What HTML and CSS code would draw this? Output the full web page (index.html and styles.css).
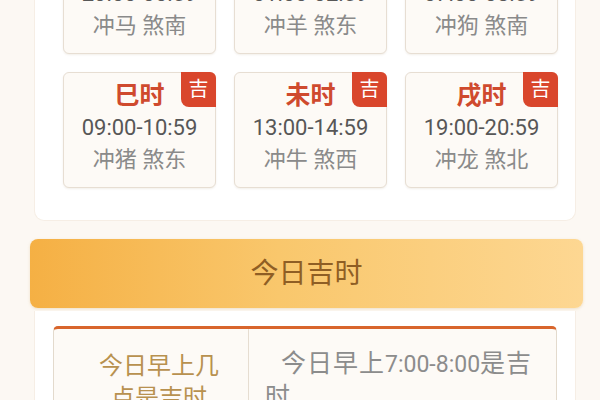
FILE: index.html
```html
<!DOCTYPE html>
<html lang="zh-CN">
<head>
	<meta charset="UTF-8">
	<title>今日吉时</title>
	<link rel="stylesheet" href="styles.css">
</head>
<body>
<div class="wrap">
    <div class="panel">
        <ul class="hours">
            <li class="hour"><h3>子时</h3><p class="time">23:00-00:59</p><p class="chong">冲马 煞南</p></li>
            <li class="hour"><h3>丑时</h3><p class="time">01:00-02:59</p><p class="chong">冲羊 煞东</p></li>
            <li class="hour"><h3>辰时</h3><p class="time">07:00-08:59</p><p class="chong">冲狗 煞南</p></li>
            <li class="hour"><span class="tag">吉</span><h3>巳时</h3><p class="time">09:00-10:59</p><p class="chong">冲猪 煞东</p></li>
            <li class="hour"><span class="tag">吉</span><h3>未时</h3><p class="time">13:00-14:59</p><p class="chong">冲牛 煞西</p></li>
            <li class="hour"><span class="tag">吉</span><h3>戌时</h3><p class="time">19:00-20:59</p><p class="chong">冲龙 煞北</p></li>
        </ul>
    </div>
    <!--/panel-->
    <div class="banner">今日吉时</div>
    <div class="panel panel-qa">
        <div class="qa">
            <div class="q">今日早上几点是吉时</div>
            <div class="a">今日早上<span class="num">7:00-8:00</span>是吉时</div>
        </div>
    </div>
</div>
<!--/wrap-->
</body>
</html>
```

FILE: styles.css
```css
body,div,ul,li,p,h3 {margin:0;padding:0;}
body {
	background:#fcf8f3;
	font-family:Roboto,"Noto Sans CJK SC",sans-serif;
	overflow:hidden;
}
.wrap {
	width:553px;
	padding-left:30px;
}
.panel {
	width:542px;
	margin:-82px 0 0 4px;
	background:#fff;
	border:1px solid #f6eee5;
	border-top:0;
	border-radius:0 0 10px 10px;
	box-sizing:border-box;
	padding:20px 0 32px 28px;
}
.hours {
	display:grid;
	grid-template-columns:repeat(3,153px);
	gap:18px;
	list-style:none;
}
.hour {
	position:relative;
	height:116px;
	box-sizing:border-box;
	padding-top:8px;
	text-align:center;
	background:#fdfaf6;
	border:1px solid #e7ded3;
	border-radius:6px;
	box-shadow:0 1px 2px rgba(150,120,80,.12);
}
.hour h3 {
	font-size:25px;
	line-height:30px;
	font-weight:bold;
	color:#cf4a2e;
}
.hour .time {
	font-size:22px;
	line-height:34px;
	color:#575757;
}
.hour .chong {
	font-size:22px;
	line-height:30px;
	color:#8a8a8a;
}
.tag {
	position:absolute;
	top:-1px;
	right:-1px;
	width:35px;
	height:35px;
	line-height:34px;
	font-size:20px;
	color:#fff;
	background:#d9462c;
	border-radius:0 6px 0 8px;
}
.banner {
	height:69px;
	line-height:69px;
	margin-top:18px;
	text-align:center;
	font-size:28px;
	color:#8f5e24;
	background:linear-gradient(90deg,#f5b044,#f9c76c 45%,#fdd792);
	border-radius:8px;
	box-shadow:0 1px 3px rgba(200,150,60,.25);
}
.panel-qa {
	margin-top:3px;
	padding:15px 18px 40px 18px;
	border-radius:0;
}
.qa {
	display:flex;
	background:#fdfaf6;
	border:1px solid #e3dacd;
	border-top:3px solid #d8652c;
	border-radius:5px 5px 0 0;
	min-height:120px;
}
.q {
	width:195px;
	box-sizing:border-box;
	padding:21px 24px 0 40px;
	border-right:1px solid #e6ddd1;
	text-align:center;
	font-size:24px;
	line-height:32px;
	color:#b8914f;
}
.a {
	flex:1;
	padding:19px 10px 0 16px;
	text-indent:16px;
	font-size:25px;
	letter-spacing:1px;
	line-height:32px;
	color:#8c8c8c;
}
.a .num {
	font-size:23px;
	letter-spacing:0;
}
```
